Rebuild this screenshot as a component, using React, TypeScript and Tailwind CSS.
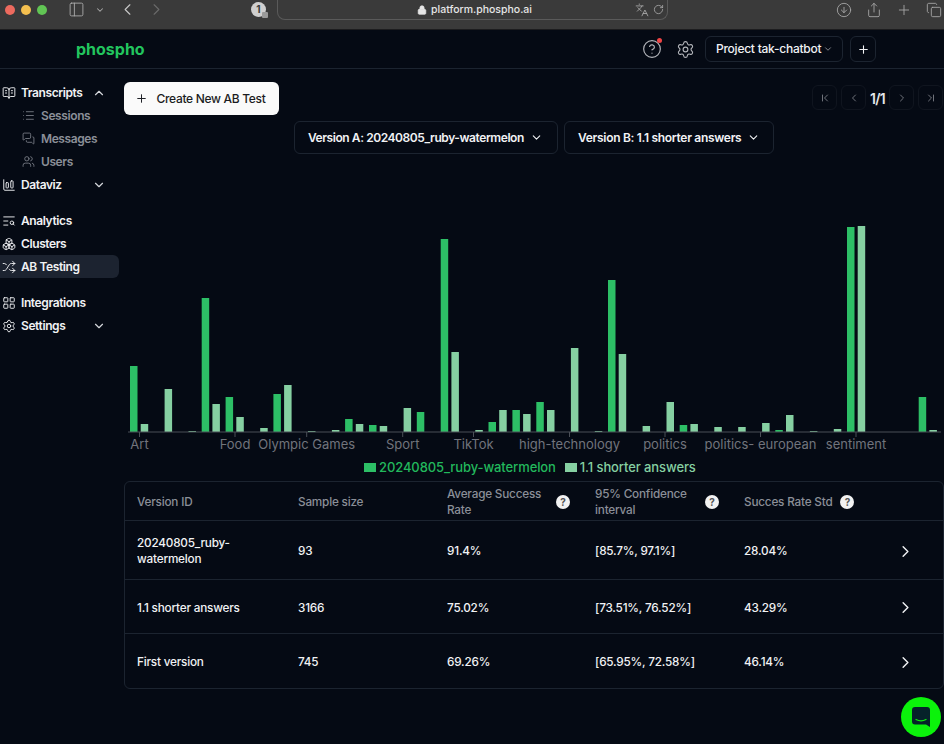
import React from "react";
import {
  BookOpenText, ChevronUp, ChevronDown, ChevronLeft, ChevronRight, ChevronFirst, ChevronLast, List, MessagesSquare, Users,
  ChartColumnBig, TextSearch, Boxes, Shuffle, LayoutGrid, Settings, Plus, CircleHelp, PanelLeft, Lock, Languages,
  RotateCw, CircleArrowDown, Share, Copy,
} from "lucide-react";

const BARS: [number, number, number][] = [
  [0, 66, 8], [1, 0, 43], [2, 0, 1], [3, 134, 28], [4, 35, 15], [5, 0, 4], [6, 38, 47], [7, 0, 1], [8, 0, 2],
  [9, 13, 8], [10, 7, 6], [11, 0, 24], [12, 20, 0], [13, 193, 80], [14, 0, 2], [15, 10, 22], [16, 22, 18],
  [17, 30, 22], [18, 0, 84], [19, 0, 1], [20, 152, 78], [21, 0, 6], [22, 0, 30], [23, 7, 8], [24, 0, 5],
  [25, 0, 5], [26, 0, 9], [27, 2, 17], [28, 0, 1], [29, 0, 3], [30, 205, 206], [33, 35, 2],
];
const TICKS: [number, string][] = [
  [139.5, "Art"], [235, "Food"], [306.7, "Olympic Games"], [402.7, "Sport"], [473.5, "TikTok"],
  [569.5, "high-technology"], [665, "politics"], [760.5, "politics- european"], [856, "sentiment"],
];

function Chart() {
  const ox = 124, base = 272;
  return (
    <svg width="820" height="296" className="block shrink-0">
      {BARS.map(([i, a, b]) => (
        <g key={i}>
          {a > 0 && <rect x={130 + 23.9 * i - ox} y={base - a} width="7.5" height={a} fill="#2dbf66" />}
          {b > 0 && <rect x={140.7 + 23.9 * i - ox} y={base - b} width="7.5" height={b} fill="#86d0a2" />}
        </g>
      ))}
      <line x1="4" x2="817" y1={base} y2={base} stroke="#4b4f57" strokeWidth="1" />
      {TICKS.map(([x, t]) => (
        <g key={t}>
          <line x1={x - ox} x2={x - ox} y1={base} y2={base + 5} stroke="#4b4f57" />
          <text x={x - ox} y={base + 17} textAnchor="middle" fill="#71747c" fontSize="13" fontFamily="Inter, sans-serif">{t}</text>
        </g>
      ))}
    </svg>
  );
}

function NavRow({ icon, label, chevron, active, sub }: { icon: React.ReactNode; label: string; chevron?: "up" | "down"; active?: boolean; sub?: boolean }) {
  return (
    <div className={`flex h-[23px] items-center rounded-r-md ${sub ? "pl-[22px] text-[#8b8f98]" : "pl-[2px] text-[#f1f2f4]"} ${active ? "bg-[#1c2330]" : ""}`}>
      <span className="flex w-[19px] shrink-0 items-center">{icon}</span>
      <span className="flex-1 text-[12px] font-semibold tracking-[-0.4px]">{label}</span>
      {chevron === "up" && <ChevronUp size={14} className="mr-[13px] text-[#d5d7db]" />}
      {chevron === "down" && <ChevronDown size={14} className="mr-[13px] text-[#d5d7db]" />}
    </div>
  );
}

function Q() {
  return <span className="flex h-[14px] w-[14px] shrink-0 items-center justify-center rounded-full bg-[#f2f2f2] text-[10px] font-bold text-[#555]">?</span>;
}

const ROWS = [
  { id: "20240805_ruby-watermelon", n: "93", a: "91.4%", c: "[85.7%, 97.1%]", s: "28.04%", h: "h-[59px]" },
  { id: "1.1 shorter answers", n: "3166", a: "75.02%", c: "[73.51%, 76.52%]", s: "43.29%", h: "h-[54px]" },
  { id: "First version", n: "745", a: "69.26%", c: "[65.95%, 72.58%]", s: "46.14%", h: "h-[54px]" },
];
const COLS = "grid grid-cols-[161px_149px_148px_149px_1fr] items-center pl-[12px]";

export default function App() {
  return (
    <div className="relative flex h-[744px] w-[944px] flex-col overflow-hidden bg-[#050a14] font-['Inter',sans-serif] text-[#f1f2f4]">
      {/* browser chrome */}
      <div className="flex h-[30px] shrink-0 items-start border-b border-[#1d1d1f] bg-[#3a3a3a] text-[#a9a9a9]">
        <div className="flex h-[19px] items-center gap-[6px] pl-[5px]">
          <span className="h-[10px] w-[10px] rounded-full bg-[#ed6a5e]" />
          <span className="h-[10px] w-[10px] rounded-full bg-[#f4bf4f]" />
          <span className="h-[10px] w-[10px] rounded-full bg-[#61c554]" />
        </div>
        <div className="flex h-[19px] items-center pl-[21px]">
          <PanelLeft size={17} strokeWidth={1.3} />
          <ChevronDown size={10} strokeWidth={2.5} className="ml-[10px]" />
          <ChevronLeft size={19} strokeWidth={1.4} className="ml-[13px] text-[#c8c8c8]" />
          <ChevronRight size={19} strokeWidth={1.4} className="ml-[10px] text-[#6a6a6a]" />
        </div>
        <div className="flex h-[19px] items-center pl-[85px]">
          <span className="relative flex h-[15px] w-[15px] items-center justify-center rounded-full bg-[#cfcfcf] text-[10px] font-bold text-[#3a3a3a]">
            1
            <span className="absolute bottom-[-1px] right-[-2px] h-[6px] w-[6px] rounded-[1px] bg-[#9a9a9a]" />
          </span>
        </div>
        <div className="ml-[11px] flex h-[20px] w-[391px] items-center rounded-b-lg border border-t-0 border-[#5a5a5a] pr-[3px]">
          <div className="flex flex-1 items-center justify-center gap-[4px] pl-[36px] text-[#e6e6e6]">
            <Lock size={10} fill="currentColor" />
            <span className="text-[10.5px] font-medium">platform.phospho.ai</span>
          </div>
          <Languages size={14} strokeWidth={1.5} className="mr-[4px]" />
          <RotateCw size={11} strokeWidth={1.8} />
        </div>
        <div className="flex h-[19px] flex-1 items-center justify-end gap-[14px] pr-[2px]">
          <CircleArrowDown size={16} strokeWidth={1.3} />
          <Share size={16} strokeWidth={1.3} />
          <Plus size={16} strokeWidth={1.3} />
          <Copy size={16} strokeWidth={1.3} />
        </div>
      </div>

      {/* app header */}
      <div className="flex h-[39px] shrink-0 items-center border-b border-[#1c2430] pl-[76px] pr-[68px]">
        <span className="text-[16px] font-bold text-[#22c55e]">phospho</span>
        <div className="ml-auto flex items-center">
          <span className="relative flex">
            <CircleHelp size={20} strokeWidth={1.4} className="text-[#b3b5ba]" />
            <span className="absolute right-[0px] top-[-1px] h-[5px] w-[5px] rounded-full bg-[#ef4444]" />
          </span>
          <Settings size={19} strokeWidth={1.4} className="ml-[14px] text-[#b3b5ba]" />
          <div className="ml-[10px] flex h-[26px] w-[138px] items-center whitespace-nowrap rounded-md border border-[#1c2430] pl-[10px] text-[12px] font-medium tracking-[-0.25px]">
            Project tak-chatbot
            <ChevronDown size={10} className="ml-[2px] text-[#9a9ca2]" />
          </div>
          <div className="ml-[7px] flex h-[26px] w-[26px] items-center justify-center rounded-md border border-[#1c2430]">
            <Plus size={13} strokeWidth={2} />
          </div>
        </div>
      </div>

      <div className="flex min-h-0 flex-1">
        {/* sidebar */}
        <aside className="flex w-[119px] shrink-0 flex-col pt-[12px]">
          <NavRow icon={<BookOpenText size={14} strokeWidth={1.6} />} label="Transcripts" chevron="up" />
          <NavRow sub icon={<List size={13} strokeWidth={1.4} />} label="Sessions" />
          <NavRow sub icon={<MessagesSquare size={13} strokeWidth={1.4} />} label="Messages" />
          <NavRow sub icon={<Users size={13} strokeWidth={1.4} />} label="Users" />
          <NavRow icon={<ChartColumnBig size={14} strokeWidth={1.6} />} label="Dataviz" chevron="down" />
          <div className="h-[13px]" />
          <NavRow icon={<TextSearch size={14} strokeWidth={1.6} />} label="Analytics" />
          <NavRow icon={<Boxes size={14} strokeWidth={1.6} />} label="Clusters" />
          <NavRow active icon={<Shuffle size={14} strokeWidth={1.6} />} label="AB Testing" />
          <div className="h-[13px]" />
          <NavRow icon={<LayoutGrid size={14} strokeWidth={1.6} />} label="Integrations" />
          <NavRow icon={<Settings size={14} strokeWidth={1.6} />} label="Settings" chevron="down" />
        </aside>

        {/* main */}
        <main className="ml-[5px] flex w-[820px] flex-col pt-[13px]">
          <div className="flex items-start justify-between">
            <div className="flex h-[33px] w-[155px] items-center justify-center gap-[8px] whitespace-nowrap rounded-md bg-[#fafafa] pr-[2px] text-[12px] font-medium tracking-[-0.3px] text-[#1a1c22]">
              <Plus size={13} strokeWidth={1.8} />
              Create New AB Test
            </div>
            <div className="mt-[3px] mr-[1px] flex items-center text-[#70737b]">
              <span className="flex h-[25px] w-[25px] items-center justify-center rounded-md border border-[#10151f]"><ChevronFirst size={12} /></span>
              <span className="ml-[4px] flex h-[25px] w-[25px] items-center justify-center rounded-md border border-[#10151f]"><ChevronLeft size={12} /></span>
              <span className="mt-[2px] w-[23px] text-center text-[14px] font-semibold tracking-[-0.7px] text-[#e6e7ea]">1/1</span>
              <span className="flex h-[25px] w-[25px] items-center justify-center rounded-md border border-[#10151f]"><ChevronRight size={12} /></span>
              <span className="ml-[4px] flex h-[25px] w-[25px] items-center justify-center rounded-md border border-[#10151f]"><ChevronLast size={12} /></span>
            </div>
          </div>
          <div className="mt-[6px] flex justify-center gap-[6px]">
            <div className="flex h-[33px] w-[264px] items-center justify-between whitespace-nowrap rounded-md border border-[#1c2430] pl-[13px] pr-[14px] text-[12px] font-semibold tracking-[-0.43px]">
              Version A: 20240805_ruby-watermelon
              <ChevronDown size={13} />
            </div>
            <div className="flex h-[33px] w-[210px] items-center justify-between whitespace-nowrap rounded-md border border-[#1c2430] pl-[13px] pr-[13px] text-[12px] font-semibold tracking-[-0.3px]">
              Version B: 1.1 shorter answers
              <ChevronDown size={13} />
            </div>
          </div>

          <div className="mt-[6px]">
            <Chart />
          </div>

          <div className="mt-[1px] flex h-[21px] items-center pl-[240px] text-[13px] font-medium tracking-[-0.1px]">
            <span className="h-[9px] w-[12px] bg-[#2dbf66]" />
            <span className="ml-[3px] text-[#22b85c]">20240805_ruby-watermelon</span>
            <span className="ml-[9px] h-[9px] w-[12px] bg-[#86d0a2]" />
            <span className="ml-[3px] text-[#86d0a2]">1.1 shorter answers</span>
          </div>

          <div className="mt-[3px] rounded-md border border-[#1c2430]">
            <div className={`${COLS} h-[39px] border-b border-[#1c2430] pt-[1px] text-[11.75px] font-medium leading-[16px] tracking-[-0.2px] text-[#8b8f98]`}>
              <span>Version ID</span>
              <span>Sample size</span>
              <div className="flex items-center">
                <span className="w-[109px]">Average Success Rate</span>
                <Q />
              </div>
              <div className="flex items-center">
                <span className="w-[110px]">95% Confidence interval</span>
                <Q />
              </div>
              <div className="flex items-center gap-[8px]">
                <span>Succes Rate Std</span>
                <Q />
              </div>
            </div>
            {ROWS.map((r, i) => (
              <div key={r.id} className={`${COLS} ${r.h} ${i < 2 ? "border-b border-[#1c2430]" : ""} pt-[2px] text-[11.75px] font-medium leading-[16px] tracking-[-0.2px]`}>
                <span className="w-[110px]">{r.id}</span>
                <span>{r.n}</span>
                <span>{r.a}</span>
                <span>{r.c}</span>
                <div className="flex items-center justify-between pr-[28px]">
                  <span>{r.s}</span>
                  <ChevronRight size={19} strokeWidth={1.8} />
                </div>
              </div>
            ))}
          </div>
        </main>
      </div>

      {/* chat launcher */}
      <div className="absolute bottom-[7px] right-[3px] flex h-[40px] w-[40px] items-center justify-center rounded-full bg-[#0bf20b]">
        <svg width="18" height="20" viewBox="0 0 18 20">
          <path d="M3 0h12a3 3 0 0 1 3 3v17l-4-2.5H3a3 3 0 0 1-3-3V3a3 3 0 0 1 3-3Z" fill="#06222a" />
          <path d="M4 12.5c3 1.6 7 1.6 10 0" stroke="#0bf20b" strokeWidth="1.2" fill="none" strokeLinecap="round" />
        </svg>
      </div>
    </div>
  );
}
